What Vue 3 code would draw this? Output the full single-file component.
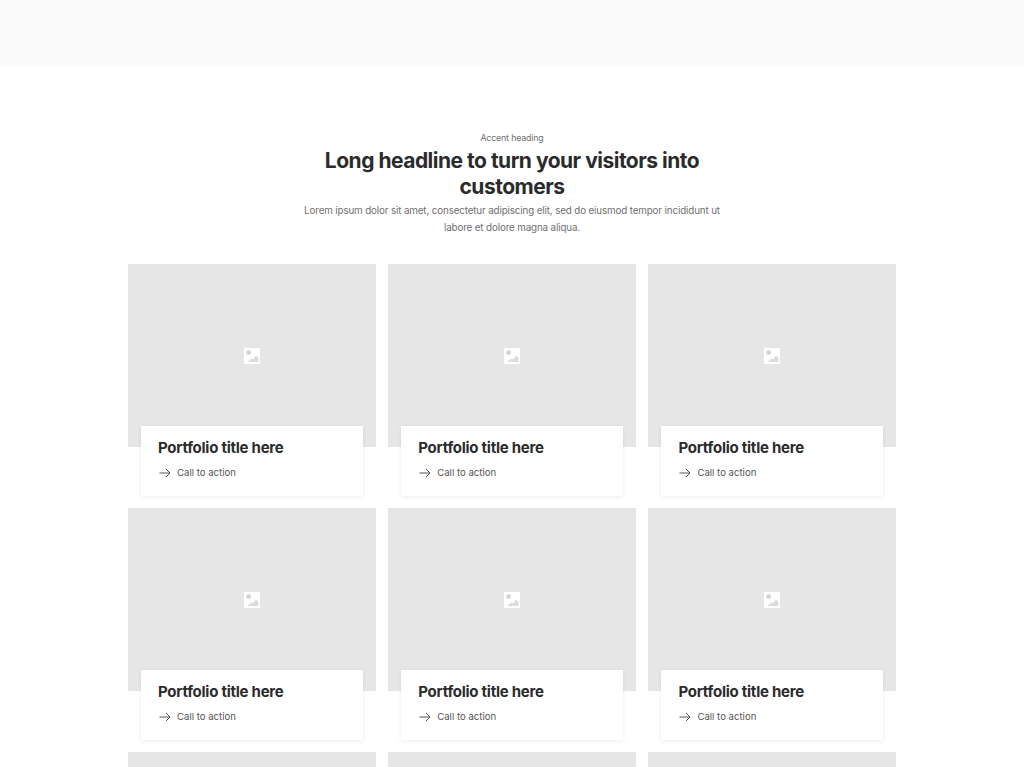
<script setup>
const items = Array.from({ length: 9 }, (_, i) => i)
</script>

<template>
  <div class="page">
    <div class="band"></div>
    <section class="portfolio">
      <header class="head">
        <p class="accent">Accent heading</p>
        <h2 class="headline">Long headline to turn your visitors into customers</h2>
        <p class="lead">Lorem ipsum dolor sit amet, consectetur adipiscing elit, sed do eiusmod tempor incididunt ut labore et dolore magna aliqua.</p>
      </header>

      <div class="grid">
        <article v-for="item in items" :key="item" class="item">
          <div class="thumb">
            <svg width="16" height="16" viewBox="0 0 16 16">
              <rect width="16" height="16" fill="#fff" />
              <circle cx="4.6" cy="4.6" r="2.4" fill="#d2d2d2" />
              <path d="M3 14 L7.5 10.5 L9 11.5 L12 7.5 L14.5 10 V14 Z" fill="#dcdcdc" />
            </svg>
          </div>
          <div v-if="item < 6" class="card">
            <h3 class="title">Portfolio title here</h3>
            <a class="cta">
              <svg width="12" height="10" viewBox="0 0 12 10" fill="none" stroke="#555" stroke-width="1">
                <path d="M0.5 5 H11 M7 1 L11 5 L7 9" />
              </svg>
              <span>Call to action</span>
            </a>
          </div>
        </article>
      </div>
    </section>
  </div>
</template>

<style scoped>
.page {
  height: 767px;
  overflow: hidden;
  background: #fff;
  font-family: "Inter", "Liberation Sans", sans-serif;
}

.band {
  height: 66px;
  background: #fafafa;
}

.portfolio {
  width: 768px;
  margin: 0 auto;
  padding-top: 64px;
}

.head {
  width: 430px;
  margin: 0 auto 28px;
  text-align: center;
}

.accent {
  margin: 0 0 3px;
  font-size: 8.8px;
  line-height: 15px;
  letter-spacing: -0.15px;
  color: #6f6f6f;
}

.headline {
  margin: 0 auto;
  width: 390px;
  font-size: 21px;
  line-height: 26px;
  font-weight: 700;
  letter-spacing: -0.5px;
  color: #2b2b2b;
}

.lead {
  margin: 2px 0 0;
  font-size: 9.8px;
  line-height: 17px;
  letter-spacing: -0.13px;
  color: #6f6f6f;
}

.grid {
  display: grid;
  grid-template-columns: repeat(3, 247.6px);
  column-gap: 12.6px;
  row-gap: 12px;
}

.thumb {
  height: 183px;
  display: flex;
  align-items: center;
  justify-content: center;
  background: #e6e6e6;
}

.card {
  position: relative;
  height: 70px;
  margin: -21px 13px 0;
  padding: 13px 17px 0;
  box-sizing: border-box;
  background: #fff;
  box-shadow: 0 1px 4px rgba(0, 0, 0, 0.08);
}

.title {
  margin: 0;
  font-size: 15px;
  line-height: 18px;
  font-weight: 700;
  letter-spacing: -0.25px;
  color: #2b2b2b;
}

.cta {
  display: flex;
  align-items: center;
  gap: 6px;
  margin-top: 8px;
  padding-left: 1px;
  font-size: 9.6px;
  line-height: 15px;
  color: #555;
}
</style>
